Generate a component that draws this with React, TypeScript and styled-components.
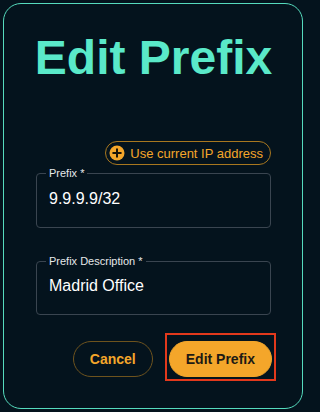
import React from 'react';
import styled, { createGlobalStyle } from 'styled-components';

const GlobalStyle = createGlobalStyle`
  html, body {
    margin: 0;
    padding: 0;
    background-color: #04131d;
    overflow: hidden;
  }
  body {
    padding: 3px;
    font-family: 'Liberation Sans', Arial, sans-serif;
  }
  * {
    box-sizing: border-box;
  }
`;

const Card = styled.div`
  width: 300px;
  height: 406px;
  border: 1px solid #55dbbd;
  border-radius: 18px;
  background-color: #04131d;
  padding: 26px 31px 0 32px;
  display: flex;
  flex-direction: column;
`;

const Title = styled.h1`
  margin: 0 -10px;
  font-family: 'Liberation Sans', Arial, sans-serif;
  font-size: 48px;
  font-weight: 700;
  line-height: 55px;
  color: #5ae9c9;
  text-align: center;
  white-space: nowrap;
`;

const ChipRow = styled.div`
  display: flex;
  justify-content: flex-end;
  margin-top: 56px;
`;

const Chip = styled.button`
  display: flex;
  align-items: center;
  gap: 5px;
  height: 24px;
  padding: 0 7px 0 3px;
  border: 1px solid #a8771f;
  border-radius: 12px;
  background: transparent;
  color: #f4a62a;
  font-family: 'Liberation Sans', Arial, sans-serif;
  font-size: 13px;
  cursor: pointer;
`;

const PlusDot = styled.svg`
  width: 16px;
  height: 16px;
  flex-shrink: 0;
`;

const Field = styled.fieldset<{ $gap: number; $top: number }>`
  margin: ${(p) => p.$gap}px 0 0;
  padding: ${(p) => p.$top}px 12px 18px;
  border: 1px solid #3a4550;
  border-radius: 4px;
  min-width: 0;
`;

const Legend = styled.legend`
  padding: 0 3px;
  margin-left: -3px;
  font-family: 'Liberation Sans', Arial, sans-serif;
  font-size: 11px;
  line-height: 12px;
  color: #e6e8ea;
`;

const Value = styled.input`
  display: block;
  width: 100%;
  height: 20px;
  padding: 0;
  border: none;
  outline: none;
  background: transparent;
  color: #ffffff;
  font-family: 'Liberation Sans', Arial, sans-serif;
  font-size: 16px;
  line-height: 20px;
`;

const Actions = styled.div`
  display: flex;
  justify-content: flex-end;
  align-items: flex-end;
  gap: 16px;
  margin-top: 26px;
  margin-right: -1px;
`;

const Button = styled.button<{ $primary?: boolean }>`
  height: 36px;
  padding: 0 16px;
  border-radius: 18px;
  border: 1px solid ${(p) => (p.$primary ? '#f4a62a' : '#6e531d')};
  background-color: ${(p) => (p.$primary ? '#f4a62a' : 'transparent')};
  color: ${(p) => (p.$primary ? '#1d1a14' : '#f4a62a')};
  font-family: 'Liberation Sans', Arial, sans-serif;
  font-size: 14px;
  font-weight: 700;
  cursor: pointer;
`;

const Highlight = styled.div`
  position: relative;

  &::after {
    content: '';
    position: absolute;
    top: -8px;
    left: -4px;
    right: -4px;
    bottom: -4px;
    border: 2px solid #e3391c;
    pointer-events: none;
  }
`;

const App: React.FC = () => {
  return (
    <>
      <GlobalStyle />
      <Card>
        <Title>Edit Prefix</Title>
        <ChipRow>
          <Chip type="button">
            <PlusDot viewBox="0 0 16 16">
              <circle cx="8" cy="8" r="7.5" fill="#f4a62a" />
              <path d="M8 4.2v7.6M4.2 8h7.6" stroke="#1a1408" strokeWidth="2" strokeLinecap="round" />
            </PlusDot>
            Use current IP address
          </Chip>
        </ChipRow>
        <Field $gap={2} $top={10}>
          <Legend>Prefix *</Legend>
          <Value defaultValue="9.9.9.9/32" />
        </Field>
        <Field $gap={27} $top={9}>
          <Legend>Prefix Description *</Legend>
          <Value defaultValue="Madrid Office" />
        </Field>
        <Actions>
          <Button type="button">Cancel</Button>
          <Highlight>
            <Button type="submit" $primary>
              Edit Prefix
            </Button>
          </Highlight>
        </Actions>
      </Card>
    </>
  );
};

export default App;
